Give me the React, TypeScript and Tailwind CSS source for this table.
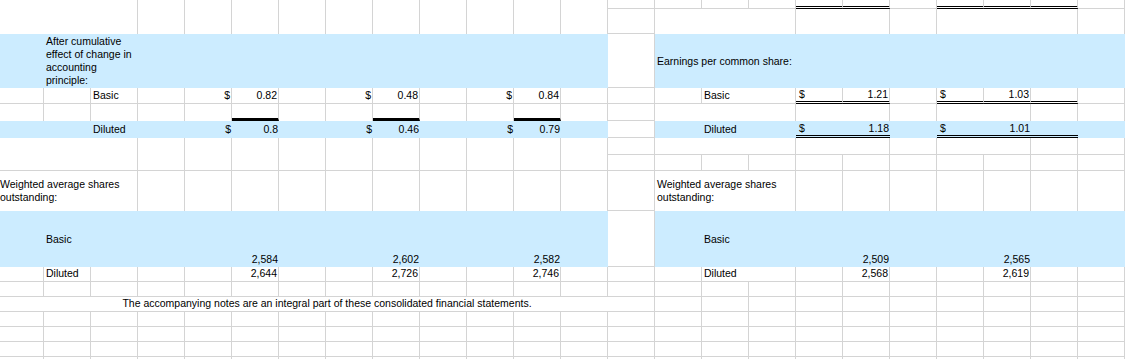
import React from 'react';
import clsx from 'clsx';

type Align = 'l' | 'r' | 'c';

interface Cell {
  text?: string;
  align?: Align;
  middle?: boolean;
  wrap?: boolean;
  pad?: string;
  rs?: number;
  cs?: number;
  edge?: 'double' | 'thick';
}

const ROWS = 17;
const COLS = 24;
const BLUE_ROWS = [2, 5, 9];
const GAP_COL = 13; // white column between the two statement panes

const colSpan: Record<number, string> = { 2: 'col-span-2', 3: 'col-span-3', 14: 'col-span-14' };
const rowSpan: Record<number, string> = { 2: 'row-span-2' };

const NOTE = 'The accompanying notes are an integral part of these consolidated financial statements.';

const sheet: Record<string, Cell> = {};
const put = (r: number, c: number, cell: Cell) => {
  const key = `${r}-${c}`;
  sheet[key] = { ...sheet[key], ...cell };
};

// left pane merges
put(0, 0, { rs: 2, cs: 3 });
put(6, 0, { rs: 2, cs: 3 });
for (let c = 3; c <= 12; c++) {
  put(0, c, { rs: 2 });
  put(6, c, { rs: 2 });
}
put(2, 1, { cs: 2, text: 'After cumulative effect of change in accounting principle:', wrap: true, middle: true });
put(8, 0, { cs: 3, text: 'Weighted average shares outstanding:', wrap: true, middle: true, pad: 'pl-0' });
put(12, 0, { cs: 14, text: NOTE, align: 'c' });

// left pane figures
const leftEps = [
  [3, 'Basic', ['0.82', '0.48', '0.84']],
  [5, 'Diluted', ['0.8', '0.46', '0.79']],
] as const;
leftEps.forEach(([r, label, vals]) => {
  put(r, 2, { text: label });
  vals.forEach((v, i) => {
    put(r, 4 + i * 3, { text: '$', align: 'r' });
    put(r, 5 + i * 3, { text: v, align: 'r' });
  });
});
[5, 8, 11].forEach((c) => put(4, c, { edge: 'thick' }));

const leftShares = [
  [9, 'Basic', ['2,584', '2,602', '2,582']],
  [10, 'Diluted', ['2,644', '2,726', '2,746']],
] as const;
leftShares.forEach(([r, label, vals]) => {
  put(r, 1, { text: label, middle: r === 9 });
  vals.forEach((v, i) => put(r, 5 + i * 3, { text: v, align: 'r' }));
});

// right pane merges
put(1, 14, { cs: 3 });
put(1, 17, { cs: 2 });
put(1, 20, { cs: 3 });
put(2, 14, { cs: 3, text: 'Earnings per common share:', middle: true });
[4, 6].forEach((r) => {
  put(r, 14, { cs: 3 });
  put(r, 17, { cs: 2 });
  put(r, 20, { cs: 2 });
});
put(8, 14, { cs: 3, text: 'Weighted average shares outstanding:', wrap: true, middle: true });

// right pane figures
const rightEps = [
  [3, 'Basic', '1.21', '1.03'],
  [5, 'Diluted', '1.18', '1.01'],
] as const;
rightEps.forEach(([r, label, a, b]) => {
  put(r, 15, { cs: 2, text: label });
  put(r, 17, { text: '$', pad: 'pl-[3px]' });
  put(r, 18, { text: a, align: 'r' });
  put(r, 20, { text: '$', pad: 'pl-[3px]' });
  put(r, 21, { text: b, align: 'r' });
});
[0, 3, 5].forEach((r) => [17, 18, 20, 21, 22].forEach((c) => put(r, c, { edge: 'double' })));

const rightShares = [
  [9, 'Basic', '2,509', '2,565'],
  [10, 'Diluted', '2,568', '2,619'],
] as const;
rightShares.forEach(([r, label, a, b]) => {
  put(r, 15, { cs: 2, text: label, middle: r === 9 });
  put(r, 18, { text: a, align: 'r' });
  put(r, 21, { text: b, align: 'r' });
});

const isBlue = (r: number, c: number) => BLUE_ROWS.includes(r) && c !== GAP_COL;

function SheetCell({ r, c, cell }: { r: number; c: number; cell: Cell }) {
  const blue = isBlue(r, c);
  // filled cells hide the gridline on their edges, so a cell sitting on a blue band drops its bottom line
  const onBlue = isBlue(r + (cell.rs ?? 1), c);
  const align = cell.align ?? 'l';

  const bottom =
    cell.edge === 'double'
      ? 'border-b-[3px] border-double border-b-black'
      : cell.edge === 'thick'
        ? 'border-b-[3px] border-b-black'
        : blue || onBlue
          ? ''
          : 'border-b border-b-[#d4d4d4]';

  const pb = cell.edge ? 'pb-0' : r === 5 ? 'pb-[2px]' : 'pb-[1px]';

  return (
    <div
      className={clsx(
        'flex min-w-0',
        cell.cs && colSpan[cell.cs],
        cell.rs && rowSpan[cell.rs],
        blue ? 'bg-[#ccecff]' : 'bg-white border-r border-r-[#d4d4d4]',
        bottom,
        cell.middle ? 'items-center' : clsx('items-end', pb),
        align === 'l' && 'justify-start',
        align === 'r' && 'justify-end pr-[1px]',
        align === 'c' && 'justify-center',
        align === 'l' && (cell.pad ?? 'pl-[2px]')
      )}
    >
      {cell.text && (
        <span className={cell.wrap ? 'whitespace-normal' : 'whitespace-nowrap'}>{cell.text}</span>
      )}
    </div>
  );
}

export default function App() {
  const covered = new Set<string>();
  const cells: React.ReactNode[] = [];

  for (let r = 0; r < ROWS; r++) {
    for (let c = 0; c < COLS; c++) {
      const key = `${r}-${c}`;
      if (covered.has(key)) continue;
      const cell = sheet[key] ?? {};
      for (let dr = 0; dr < (cell.rs ?? 1); dr++) {
        for (let dc = 0; dc < (cell.cs ?? 1); dc++) covered.add(`${r + dr}-${c + dc}`);
      }
      cells.push(<SheetCell key={key} r={r} c={c} cell={cell} />);
    }
  }

  return (
    <div className="h-[359px] w-[1125px] overflow-hidden bg-white text-black font-['Liberation_Sans',Arial,sans-serif] text-[10.5px] leading-[13px]">
      <div className="grid grid-cols-[44px_repeat(23,47px)] grid-rows-[9px_25px_54px_16px_17px_17px_17px_16px_40px_56px_15px_15px_15px_15px_15px_15px_15px]">
        {cells}
      </div>
    </div>
  );
}
